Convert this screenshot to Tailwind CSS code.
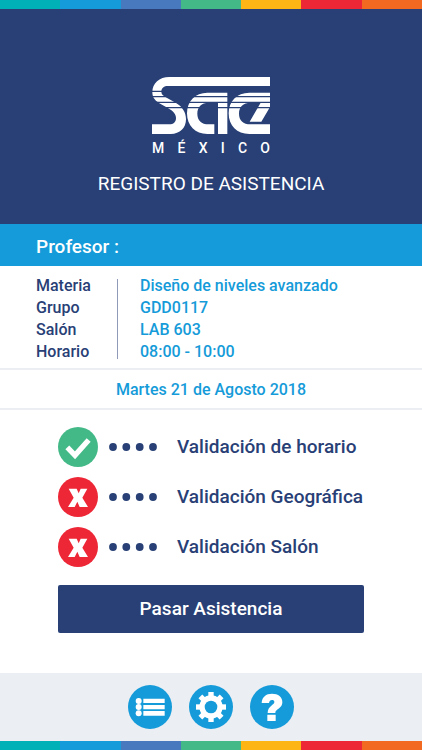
<!DOCTYPE html>
<html lang="es">
<head>
<meta charset="utf-8">
<meta name="viewport" content="width=device-width, initial-scale=1">
<title>Registro de asistencia</title>
<script src="https://cdn.jsdelivr.net/npm/@tailwindcss/browser@4"></script>
</head>
<body class="flex min-h-screen flex-col bg-white font-['Roboto','Liberation_Sans',sans-serif] font-medium text-[#284076]">
  <div class="grid h-[9px] shrink-0 grid-cols-7" aria-hidden="true">
    <i class="bg-[#00b1b8]"></i><i class="bg-[#159bd9]"></i><i class="bg-[#4878be]"></i><i class="bg-[#44b988]"></i><i class="bg-[#fdb515]"></i><i class="bg-[#ee2737]"></i><i class="bg-[#f26a21]"></i>
  </div>

  <header class="flex flex-col items-center bg-[#284076] pt-[68px] pb-7 text-white">
    <div class="w-[118px]">
      <svg class="block w-full" viewBox="36 36 354 171" fill="#fff" role="img" aria-label="SAE">
        <path d="M390 36H88C58 36 37 54 37 82C37 100 48 109 62 117L85 130C101 139 108 149 108 159C108 171 100 178 88 178H36V207H92C120 207 138 189 138 163C138 142 127 125 108 114L80 98C69 92 64 87 64 80C64 69 72 63 84 63H390Z"/>
        <path d="M262 83H202C166 83 141 108 141 145C141 182 166 207 202 207H223V178H206C184 178 172 166 172 146C172 126 184 113 206 113H234V207H262Z"/>
        <path d="M390 83H328C291 83 266 108 266 145C266 182 291 207 328 207H390V178H332C309 178 297 166 297 146C297 126 309 113 332 113H362L329 170H364L390 126Z"/>
        <path d="M36 79H140M36 95H390M36 112H390M36 128H390" stroke="#284076" stroke-width="3.5"/>
      </svg>
      <div class="mt-1 flex justify-between text-sm" aria-label="MÉXICO">
        <span>M</span><span>É</span><span>X</span><span>I</span><span>C</span><span>O</span>
      </div>
    </div>
    <h1 class="mt-[14px] text-[19px] leading-6 font-normal">REGISTRO DE ASISTENCIA</h1>
  </header>

  <h2 class="bg-[#159bd9] px-9 pt-[10px] pb-[6px] text-[19px] leading-[26px] text-white">Profesor :</h2>

  <section class="px-9 pt-[9px] pb-[5px] text-base leading-[22px]">
    <dl class="grid grid-cols-[81px_1px_1fr] grid-rows-4">
      <dt class="col-start-1 row-start-1">Materia</dt><dd class="col-start-3 row-start-1 pl-[22px] text-[#159bd9]">Diseño de niveles avanzado</dd>
      <dt class="col-start-1 row-start-2">Grupo</dt><dd class="col-start-3 row-start-2 pl-[22px] text-[#159bd9]">GDD0117</dd>
      <dt class="col-start-1 row-start-3">Salón</dt><dd class="col-start-3 row-start-3 pl-[22px] text-[#159bd9]">LAB 603</dd>
      <dt class="col-start-1 row-start-4">Horario</dt><dd class="col-start-3 row-start-4 pl-[22px] text-[#159bd9]">08:00 - 10:00</dd>
      <div class="col-start-2 row-span-4 row-start-1 my-1 bg-[#8e9ab8]"></div>
    </dl>
  </section>

  <p class="border-y-2 border-[#ebeef3] pt-2 pb-[6px] text-center text-base leading-6 text-[#159bd9]">Martes 21 de Agosto 2018</p>

  <main class="flex flex-1 flex-col px-[58px] pt-[17px]">
    <ul class="flex flex-col gap-[10px] text-[19px]">
      <li class="flex items-center">
        <svg class="size-10 shrink-0" viewBox="0 0 120 120" role="img" aria-label="Correcto"><circle cx="60" cy="60" r="60" fill="#44b988"/><path d="M28 61L51 85L92 39" fill="none" stroke="#fff" stroke-width="16"/></svg>
        <svg class="ml-[11px] h-2 w-12 shrink-0" viewBox="0 0 48 8" fill="#284076" aria-hidden="true"><circle cx="4" cy="4" r="3.9"/><circle cx="17.3" cy="4" r="3.9"/><circle cx="30.7" cy="4" r="3.9"/><circle cx="44" cy="4" r="3.9"/></svg>
        <span class="ml-5 whitespace-nowrap">Validación de horario</span>
      </li>
      <li class="flex items-center">
        <svg class="size-10 shrink-0" viewBox="0 0 120 120" role="img" aria-label="Error"><circle cx="60" cy="60" r="60" fill="#ee2737"/><path d="M32 35H56L62 49L68 35H88L73 62L90 90H65L58 74L50 90H30L47 62Z" fill="#fff"/></svg>
        <svg class="ml-[11px] h-2 w-12 shrink-0" viewBox="0 0 48 8" fill="#284076" aria-hidden="true"><circle cx="4" cy="4" r="3.9"/><circle cx="17.3" cy="4" r="3.9"/><circle cx="30.7" cy="4" r="3.9"/><circle cx="44" cy="4" r="3.9"/></svg>
        <span class="ml-5 whitespace-nowrap">Validación Geográfica</span>
      </li>
      <li class="flex items-center">
        <svg class="size-10 shrink-0" viewBox="0 0 120 120" role="img" aria-label="Error"><circle cx="60" cy="60" r="60" fill="#ee2737"/><path d="M32 35H56L62 49L68 35H88L73 62L90 90H65L58 74L50 90H30L47 62Z" fill="#fff"/></svg>
        <svg class="ml-[11px] h-2 w-12 shrink-0" viewBox="0 0 48 8" fill="#284076" aria-hidden="true"><circle cx="4" cy="4" r="3.9"/><circle cx="17.3" cy="4" r="3.9"/><circle cx="30.7" cy="4" r="3.9"/><circle cx="44" cy="4" r="3.9"/></svg>
        <span class="ml-5 whitespace-nowrap">Validación Salón</span>
      </li>
    </ul>
    <button type="button" class="mt-[18px] h-12 rounded-xs bg-[#284076] text-[19px] text-white">Pasar Asistencia</button>
  </main>

  <nav class="flex justify-center gap-[17px] bg-[#ebeef3] py-3">
    <button type="button" aria-label="Lista"><svg class="size-11" viewBox="0 0 132 132"><circle cx="66" cy="66" r="66" fill="#159bd9"/><g fill="#fff"><circle cx="32" cy="48" r="9"/><circle cx="32" cy="66" r="9"/><circle cx="32" cy="85" r="9"/><path d="M46 41H110V54H46ZM46 60H110V73H46ZM46 78H110V92H46Z"/></g></svg></button>
    <button type="button" aria-label="Ajustes"><svg class="size-11" viewBox="-66 -66 132 132"><circle r="66" fill="#159bd9"/><g fill="#fff"><path id="tooth" d="M-8-45H8V45H-8Z"/><use href="#tooth" transform="rotate(45)"/><use href="#tooth" transform="rotate(90)"/><use href="#tooth" transform="rotate(135)"/><circle r="35"/></g><circle r="19" fill="#159bd9"/></svg></button>
    <button type="button" aria-label="Ayuda"><svg class="size-11" viewBox="0 0 132 132"><circle cx="66" cy="66" r="66" fill="#159bd9"/><path d="M35 54C36 36 48 26 66 26C85 26 97 36 97 51C97 63 90 68 83 73C78 77 76 79 76 84H53C53 73 57 68 64 62C70 57 73 55 73 51C73 47 70 45 66 45C61 45 58 48 57 54ZM52 89H77V108H52Z" fill="#fff"/></svg></button>
  </nav>
  <div class="grid h-[9px] shrink-0 grid-cols-7" aria-hidden="true">
    <i class="bg-[#00b1b8]"></i><i class="bg-[#159bd9]"></i><i class="bg-[#4878be]"></i><i class="bg-[#44b988]"></i><i class="bg-[#fdb515]"></i><i class="bg-[#ee2737]"></i><i class="bg-[#f26a21]"></i>
  </div>
</body>
</html>
